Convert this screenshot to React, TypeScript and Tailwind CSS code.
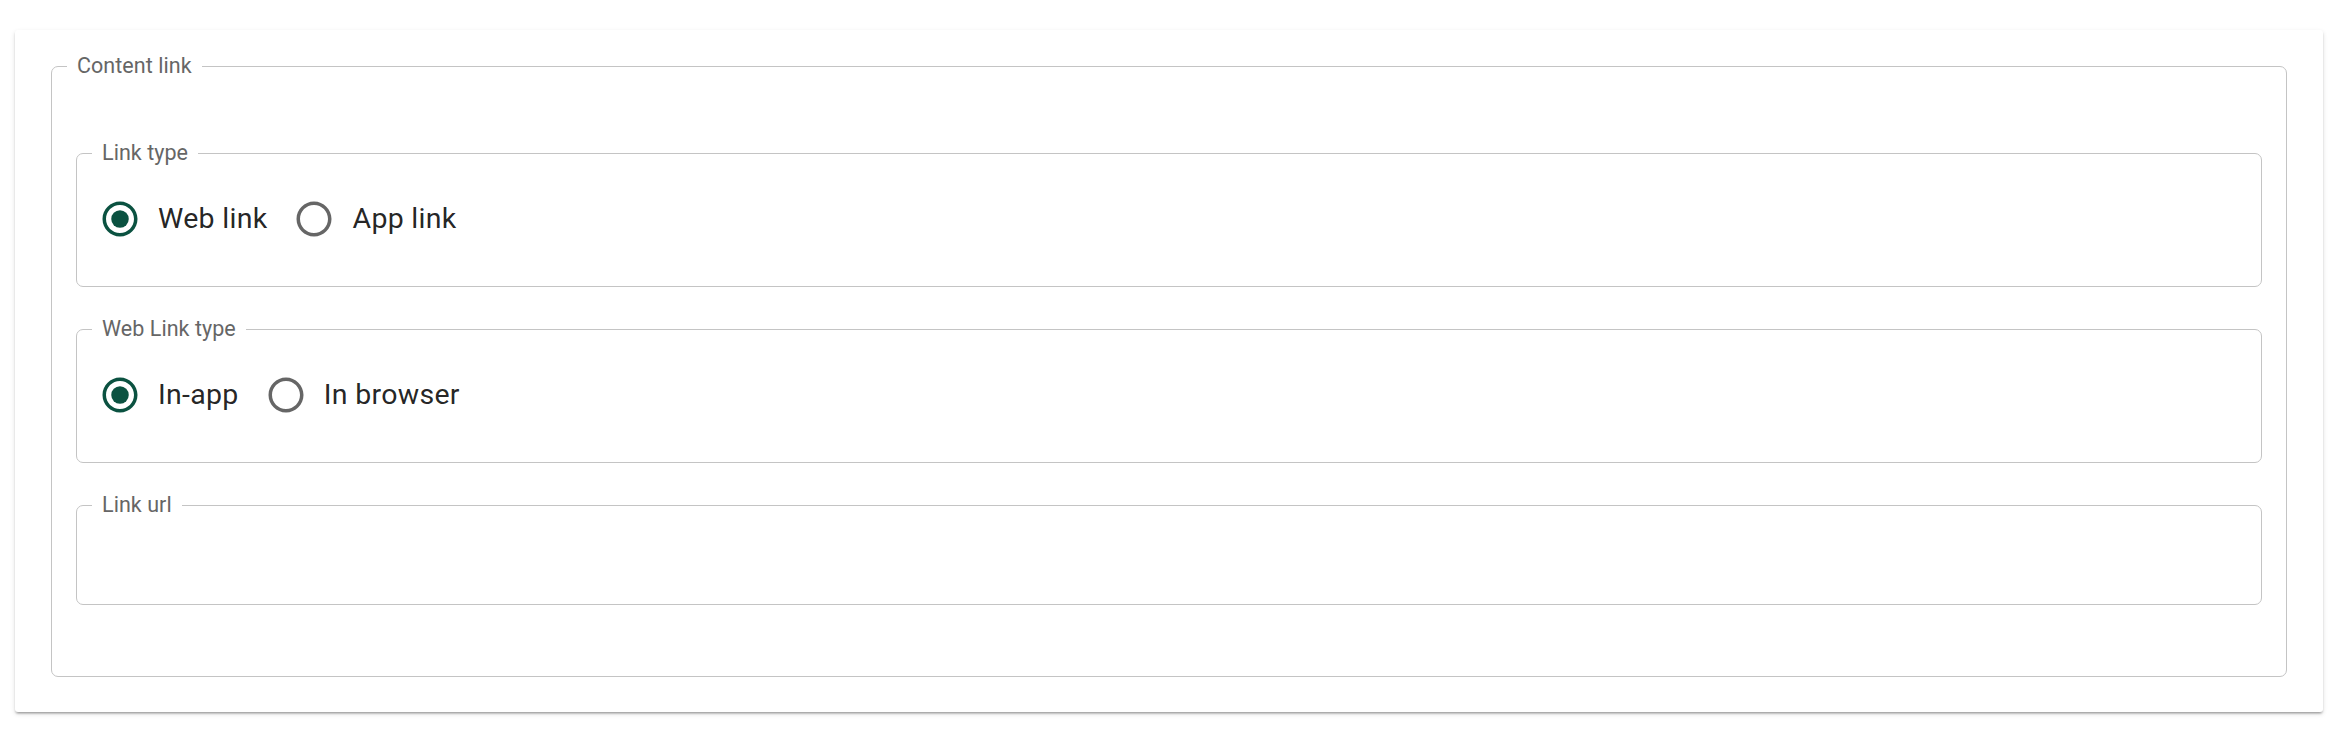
import React from "react";

const RADIO_OUTER =
  "M12 2C6.48 2 2 6.48 2 12s4.48 10 10 10 10-4.48 10-10S17.52 2 12 2zm0 18c-4.42 0-8-3.58-8-8s3.58-8 8-8 8 3.58 8 8-3.58 8-8 8z";

function RadioIcon({ checked }: { checked: boolean }) {
  return (
    <svg viewBox="0 0 24 24" className="w-[42px] h-[42px] shrink-0">
      <path d={RADIO_OUTER} fill={checked ? "#0b5241" : "#666666"} />
      {checked && <circle cx="12" cy="12" r="5" fill="#0b5241" />}
    </svg>
  );
}

function Option({ label, checked, first }: { label: string; checked: boolean; first?: boolean }) {
  return (
    <label className={`flex items-center cursor-pointer ${first ? "" : "ml-[26px]"}`}>
      <RadioIcon checked={checked} />
      <span className="ml-[17px] text-[28.5px] leading-[36px] tracking-[0.3px] text-[rgba(0,0,0,0.87)]">{label}</span>
    </label>
  );
}

function Group({ title, children }: { title: string; children: React.ReactNode }) {
  return (
    <fieldset className="border border-[#c4c4c4] rounded-[7px] min-w-0">
      <legend className="ml-[15px] px-[10px] text-[21.5px] leading-[24px] tracking-[0.05px] text-[#666666]">{title}</legend>
      {children}
    </fieldset>
  );
}

export default function App() {
  const [linkType, setLinkType] = React.useState("web");
  const [webType, setWebType] = React.useState("inapp");

  return (
    <div className="min-h-screen bg-white pt-[30px] pb-[30px] pl-[15px] pr-[23px] [font-family:Roboto,sans-serif]">
      <div className="bg-white rounded-[3px] px-[36px] pt-[24px] pb-[35px] shadow-[0px_3px_2px_-2px_rgba(0,0,0,0.2),0px_2px_2px_0px_rgba(0,0,0,0.14),0px_2px_5px_0px_rgba(0,0,0,0.12)]">
        <Group title="Content link">
          <div className="flex flex-col gap-[30px] px-[24px] pt-[63px] pb-[71px]">
            <Group title="Link type">
              <div className="flex h-[36px] items-center pl-[22px] mt-[36px] mb-[49px]">
                <div onClick={() => setLinkType("web")}>
                  <Option label="Web link" checked={linkType === "web"} first />
                </div>
                <div onClick={() => setLinkType("app")}>
                  <Option label="App link" checked={linkType === "app"} />
                </div>
              </div>
            </Group>
            <Group title="Web Link type">
              <div className="flex h-[36px] items-center pl-[22px] mt-[36px] mb-[49px]">
                <div onClick={() => setWebType("inapp")}>
                  <Option label="In-app" checked={webType === "inapp"} first />
                </div>
                <div onClick={() => setWebType("browser")}>
                  <Option label="In browser" checked={webType === "browser"} />
                </div>
              </div>
            </Group>
            <Group title="Link url">
              <div className="h-[87px]">
                <input className="w-full h-full px-[24px] text-[28px] outline-none bg-transparent" />
              </div>
            </Group>
          </div>
        </Group>
      </div>
    </div>
  );
}
